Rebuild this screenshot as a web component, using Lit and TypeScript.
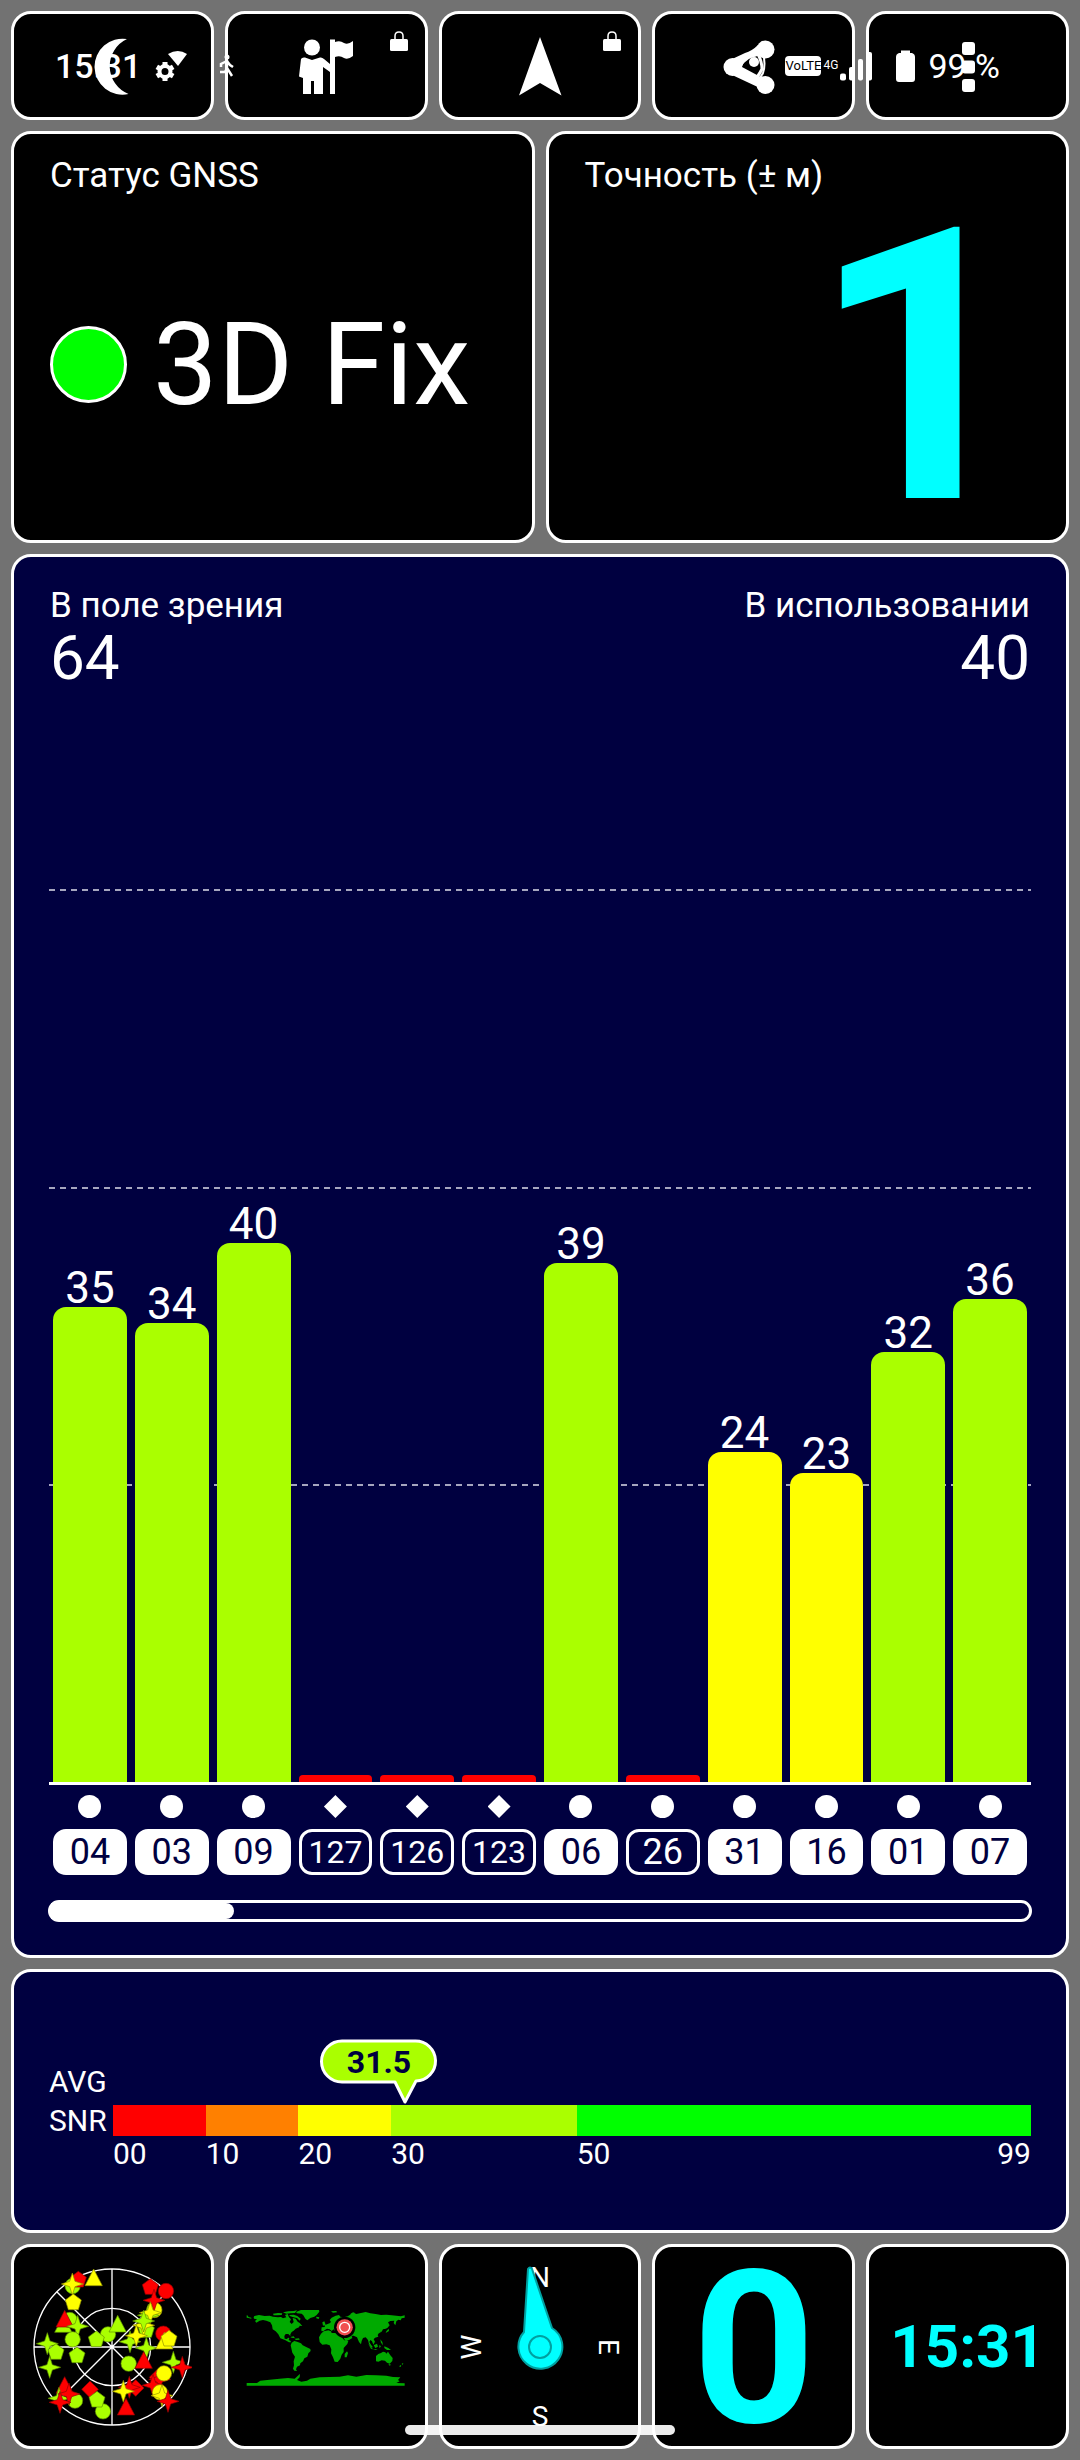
import { LitElement, html, svg, css } from "lit";
import { customElement } from "lit/decorators.js";
import { classMap } from "lit/directives/class-map.js";
import { styleMap } from "lit/directives/style-map.js";

type Kind = "circle" | "penta" | "star" | "tri" | "diamond";
type Tone = "lime" | "yellow" | "red";

interface Satellite {
  id: string;
  snr: number | null;
  level: number;
  tone: Tone;
  used: boolean;
  diamond?: boolean;
}

const SATELLITES: Satellite[] = [
  { id: "04", snr: 35, level: 53.2, tone: "lime", used: true },
  { id: "03", snr: 34, level: 51.4, tone: "lime", used: true },
  { id: "09", snr: 40, level: 60.4, tone: "lime", used: true },
  { id: "127", snr: null, level: 0.8, tone: "red", used: false, diamond: true },
  { id: "126", snr: null, level: 0.8, tone: "red", used: false, diamond: true },
  { id: "123", snr: null, level: 0.8, tone: "red", used: false, diamond: true },
  { id: "06", snr: 39, level: 58.1, tone: "lime", used: true },
  { id: "26", snr: null, level: 0.8, tone: "red", used: false },
  { id: "31", snr: 24, level: 36.9, tone: "yellow", used: true },
  { id: "16", snr: 23, level: 34.6, tone: "yellow", used: true },
  { id: "01", snr: 32, level: 48.2, tone: "lime", used: true },
  { id: "07", snr: 36, level: 54.1, tone: "lime", used: true },
];

const SKY: [Kind, number, number, Tone][] = [
  ["circle", 219, 166, "lime"], ["penta", 236, 147, "red"], ["star", 218, 160, "yellow"],
  ["tri", 282, 143, "yellow"], ["penta", 221, 215, "yellow"], ["tri", 191, 283, "lime"],
  ["circle", 210, 268, "lime"], ["tri", 195, 267, "red"], ["star", 234, 287, "lime"],
  ["circle", 325, 311, "lime"], ["penta", 290, 326, "lime"], ["tri", 354, 282, "lime"],
  ["star", 143, 339, "lime"], ["penta", 169, 364, "lime"], ["circle", 219, 326, "lime"],
  ["penta", 232, 374, "lime"], ["star", 150, 410, "lime"], ["star", 391, 333, "lime"],
  ["circle", 387, 399, "lime"], ["penta", 452, 169, "red"], ["circle", 499, 181, "red"],
  ["circle", 464, 238, "yellow"], ["star", 463, 209, "red"], ["star", 446, 254, "lime"],
  ["star", 452, 246, "yellow"], ["penta", 440, 298, "lime"], ["star", 432, 284, "yellow"],
  ["star", 432, 271, "lime"], ["star", 410, 315, "yellow"], ["star", 440, 352, "lime"],
  ["circle", 491, 309, "red"], ["tri", 494, 333, "yellow"], ["penta", 508, 324, "yellow"],
  ["tri", 432, 391, "red"], ["star", 521, 395, "lime"], ["star", 548, 410, "red"],
  ["diamond", 474, 440, "red"], ["star", 480, 446, "red"], ["star", 460, 464, "red"],
  ["circle", 493, 428, "yellow"], ["circle", 481, 485, "yellow"], ["star", 487, 495, "yellow"],
  ["star", 505, 512, "red"], ["diamond", 408, 472, "red"], ["star", 389, 470, "red"],
  ["star", 371, 482, "yellow"], ["tri", 379, 531, "red"], ["tri", 195, 466, "red"],
  ["star", 178, 503, "lime"], ["circle", 226, 510, "lime"], ["star", 208, 490, "red"],
  ["star", 181, 515, "red"], ["diamond", 271, 476, "red"], ["circle", 310, 542, "lime"],
  ["penta", 292, 507, "lime"],
];

const SHAPES: Record<Kind, string> = {
  circle: "M-23 0A23 23 0 1 1 23 0A23 23 0 1 1 -23 0Z",
  penta: "M0 -25L24 -7L15 22L-15 22L-24 -7Z",
  star: "M0 -33L8 -8L33 0L8 8L0 33L-8 8L-33 0L-8 -8Z",
  tri: "M0 -28L26 22L-26 22Z",
  diamond: "M0 -25L25 0L0 25L-25 0Z",
};

const FILL: Record<Tone, string> = { lime: "#aaff00", yellow: "#ffff00", red: "#ff0000" };
const EDGE: Record<Tone, string> = { lime: "#5f8f00", yellow: "#909000", red: "#900000" };

const LAND = [
  "M81 256L85 257L86 261L95 263L95 266L86 264L81 263Z",
  "M102 262L104 258L118 255L135 258L150 257L160 260L175 262L184 261L190 265L200 262L196 255L204 252L208 262L214 268L210 276L216 282L222 276L219 264L228 266L234 275L240 279L248 288L240 287L238 292L228 296L222 302L216 306L212 313L212 318L206 312L198 312L194 318L195 326L202 327L205 323L209 324L207 330L213 333L214 337L208 337L196 330L182 325L176 313L168 304L159 298L157 286L152 277L140 272L130 270L120 272L110 278L106 273L112 268L103 266Z",
  "M160 251L175 249L188 250L186 255L172 256L162 256ZM190 247L206 244L222 243L232 241L226 249L212 250L200 251ZM208 255L222 254L233 258L243 266L240 272L232 264L222 262L212 259Z",
  "M229 246L244 240L298 240L299 245L291 255L284 260L272 264L263 271L257 266L251 256L246 251L232 250Z",
  "M290 260L299 262L297 267L290 265Z",
  "M212 321L222 319L226 325L216 323ZM226 326L238 325L240 329L228 330Z",
  "M213 346L216 338L224 333L232 335L244 340L249 346L258 350L272 357L273 363L266 370L263 380L254 385L250 394L242 400L241 406L232 410L229 418L232 423L224 422L220 416L223 406L222 394L226 380L218 368Z",
  "M298 322L304 311L312 304L326 301L334 304L336 309L345 309L360 311L366 322L374 331L386 333L383 342L372 354L372 366L366 374L362 386L354 396L345 395L340 382L334 370L335 358L330 346L320 343L308 344L300 336Z",
  "M375 372L382 364L385 369L381 382L375 382Z",
  "M305 300L306 292L316 291L314 286L322 283L330 280L334 276L330 270L336 263L348 257L358 255L362 260L372 262L384 259L390 255L394 252L402 248L410 252L424 249L438 246L452 250L468 252L484 255L500 254L516 256L530 257L544 259L555 256L555 263L546 265L543 271L536 269L530 274L527 286L522 279L524 272L512 273L505 277L510 286L503 294L498 296L490 298L486 305L480 306L474 315L476 320L466 323L462 328L466 335L461 344L457 334L452 330L449 336L454 344L460 352L454 352L448 342L445 330L438 322L430 324L426 333L424 343L418 336L412 322L402 317L396 318L398 324L388 330L378 334L370 320L364 310L352 308L346 304L342 298L336 303L330 298L322 296L316 300L312 303L306 304Z",
  "M308 277L314 274L318 284L310 287ZM334 244L350 243L352 247L340 248ZM392 252L400 247L406 249L396 256Z",
  "M500 304L507 296L508 303L498 309ZM476 304L484 305L480 310Z",
  "M446 342L454 350L460 358L474 357L468 360L454 356ZM462 346L472 341L475 350L467 354ZM478 346L484 348L480 355ZM482 328L488 336L490 346L484 338ZM494 349L506 354L514 360L502 360L494 354Z",
  "M469 378L476 372L484 369L490 365L497 367L500 371L505 365L512 376L519 384L518 393L510 401L502 398L496 392L486 391L476 395L469 394Z",
  "M506 403L513 403L511 408ZM546 401L551 399L549 405ZM538 409L545 404L543 411Z",
  "M81 459L112 459L122 452L150 449L180 446L205 444L225 446L238 434L241 432L240 442L232 450L245 455L262 452L272 446L300 442L330 441L360 440L385 436L410 440L440 435L470 436L500 437L520 441L542 442L535 450L540 454L530 459L555 460L555 467L81 467Z",
];

const moon = svg`<path d="M127 38A28 28 0 1 0 128.500 93A30 30 0 0 1 127 38Z" />`;

const ranger = svg`
  <circle cx="312" cy="46.500" r="8" />
  <path d="M301 58Q302 56 305 56.500L312 59L320 56.500Q322 56 324 58L330 63V38.500H335V93H330V71L323 66V93H314V80H311V93H303V77L299 75.500Z" />
  <path d="M335 41Q340 39 344 42Q348 44 353 40V55Q348 59 344 57Q340 54 335 56Z" />`;

const arrow = svg`<path d="M540 36L561.500 94.500L540 82L519 94.500Z" />`;

const share = svg`
  <g>
    <circle cx="732.500" cy="66" r="9" /><circle cx="765.500" cy="48.500" r="9" /><circle cx="765.500" cy="84" r="9" />
    <path d="M730 59L745 52Q752 50 758 44L768 53Q758 55 750 57Q744 59 742 66L768 80L762 88L730 73Z" />
    <path d="M740 65Q746 55 758 53Q762 61 762 68Q758 76 754 79" fill="none" stroke="#fff" stroke-width="3" />
    <path d="M763 52Q766 63 763 72Q760 78 756 81" fill="none" stroke="#fff" stroke-width="2" />
    <circle cx="754" cy="61" r="5" />
  </g>`;

const more = svg`
  <rect x="961" y="41" width="13" height="13" rx="3" />
  <rect x="961" y="59.500" width="13" height="13" rx="3" />
  <rect x="961" y="78" width="13" height="13" rx="3" />`;

const ACTIONS = [
  { label: "Ночной режим", x: 80, icon: moon, locked: false },
  { label: "Экскурсия", x: 294, icon: ranger, locked: true },
  { label: "Навигация", x: 508, icon: arrow, locked: true },
  { label: "Поделиться", x: 722, icon: share, locked: false },
  { label: "Ещё", x: 935, icon: more, locked: false },
];

@customElement("status-bar")
export class StatusBar extends LitElement {
  static styles = css`
    :host {
      display: flex;
      align-items: center;
      justify-content: space-between;
      height: 44px;
      padding: 0 80px 0 55px;
      color: #fff;
      font: 500 34px/44px Roboto, "Liberation Sans", sans-serif;
    }
    .group {
      display: flex;
      align-items: center;
    }
    .clock {
      margin-right: 14px;
    }
    .walker {
      margin-left: 32px;
    }
    .volte {
      background: #fff;
      color: #000;
      border-radius: 4px;
      width: 36px;
      height: 20px;
      text-align: center;
      font: 400 13px/20px Roboto, sans-serif;
    }
    .net {
      font: 400 12px/14px Roboto, sans-serif;
      width: 19px;
      text-align: center;
      align-self: flex-start;
      margin-top: 14px;
    }
    .battery {
      margin: 0 12px 0 24px;
    }
    .level {
      font-weight: 400;
    }
    svg {
      display: block;
      fill: #fff;
    }
  `;

  render() {
    return html`
      <div class="group">
        <span class="clock">15:31</span>
        <svg width="32" height="32" viewBox="155 50 32 32">
          <path d="M168 54Q178 48 187 54L178 66Z" />
          <circle cx="165" cy="71.500" r="5.500" fill="none" stroke="#fff" stroke-width="4" />
          <path d="M165 62V67M165 76V81M156.800 66.800L161 69.200M169 73.800L173.200 76.200M156.800 76.200L161 73.800M169 69.200L173.200 66.800" stroke="#fff" stroke-width="5" />
        </svg>
        <svg class="walker" width="16" height="24" viewBox="219 55 16 24">
          <circle cx="227" cy="58" r="2.500" />
          <path d="M227 61V69L232 77M227 69L225 73H220M221 68V65L227 62L230 66L233 68" fill="none" stroke="#fff" stroke-width="2.500" />
        </svg>
      </div>
      <div class="group">
        <span class="volte">VoLTE</span>
        <span class="net">4G</span>
        <svg width="32" height="30" viewBox="840 51 32 30">
          <rect x="840" y="73.500" width="6" height="7" rx="2" />
          <rect x="849" y="67" width="5" height="13.500" rx="2" />
          <rect x="858" y="59" width="5" height="21.500" rx="2" />
          <rect x="867" y="52" width="5" height="28.500" rx="2" />
        </svg>
        <svg class="battery" width="20" height="32" viewBox="896 50 20 32">
          <path d="M901 50.500H910V53H912Q915 54 915 57V79Q915 82 912 82H899Q896 82 896 79V57Q896 54 899 53H901Z" />
        </svg>
        <span class="level">99 %</span>
      </div>
    `;
  }
}

@customElement("snr-chart")
export class SnrChart extends LitElement {
  static styles = css`
    :host {
      display: flex;
      flex-direction: column;
      flex: 1;
    }
    .plot {
      flex: 1;
      display: grid;
      grid-template: minmax(0, 1fr) / minmax(0, 1fr);
      border-bottom: 3px solid #fff;
    }
    .lines,
    .bars {
      grid-area: 1 / 1;
    }
    .lines {
      display: flex;
      flex-direction: column;
    }
    .band {
      flex: 1;
      background: repeating-linear-gradient(90deg, #a6a6bf 0 6px, transparent 6px 11px) top / 100% 2px
        no-repeat;
    }
    .bars,
    .names {
      display: grid;
      grid-template-columns: repeat(12, minmax(0, 1fr));
    }
    .column {
      display: flex;
      flex-direction: column;
      justify-content: flex-end;
      padding: 0 4px;
    }
    .value {
      text-align: center;
      font-size: 44px;
      line-height: 38px;
    }
    .bar {
      flex-shrink: 0;
      border-radius: 13px 13px 0 0;
    }
    .lime {
      background: #aaff00;
    }
    .yellow {
      background: #ffff00;
    }
    .red {
      background: #ff0000;
      border-radius: 4px 4px 0 0;
    }
    .names {
      margin-top: 10px;
    }
    .name {
      display: flex;
      flex-direction: column;
      align-items: center;
      gap: 11px;
      padding: 0 4px;
    }
    .dot {
      width: 23px;
      height: 23px;
      background: #fff;
      border-radius: 50%;
    }
    .dot.rhomb {
      border-radius: 0;
      clip-path: polygon(50% 0, 100% 50%, 50% 100%, 0 50%);
    }
    .pill {
      align-self: stretch;
      box-sizing: border-box;
      height: 46px;
      border: 3px solid #fff;
      border-radius: 13px;
      text-align: center;
      font-size: 36px;
      line-height: 41px;
    }
    .pill.used {
      background: #fff;
      color: #000040;
    }
    .pill.long {
      font-size: 32px;
      line-height: 40px;
    }
  `;

  render() {
    return html`
      <div class="plot">
        <div class="lines">
          <div class="band"></div>
          <div class="band"></div>
          <div class="band"></div>
        </div>
        <div class="bars">
          ${SATELLITES.map(
            (s) => html`<div class="column">
              ${s.snr === null ? null : html`<span class="value">${s.snr}</span>`}
              <div class="bar ${s.tone}" style=${styleMap({ height: `${s.level}%` })}></div>
            </div>`
          )}
        </div>
      </div>
      <div class="names">
        ${SATELLITES.map(
          (s) => html`<div class="name">
            <span class=${classMap({ dot: true, rhomb: !!s.diamond })}></span>
            <span class=${classMap({ pill: true, used: s.used, long: s.id.length > 2 })}>${s.id}</span>
          </div>`
        )}
      </div>
    `;
  }
}

@customElement("snr-scale")
export class SnrScale extends LitElement {
  static styles = css`
    :host {
      display: grid;
      grid-template: 67px 31px 36px / 64px minmax(0, 1fr);
      font-size: 30px;
    }
    .caption {
      grid-area: 1 / 1 / 4 / 2;
      margin-top: 24px;
      line-height: 39px;
    }
    .caption span {
      display: block;
    }
    .track {
      position: relative;
      grid-area: 1 / 2;
    }
    .bubble {
      position: absolute;
      top: 0;
      margin-left: -86px;
      display: block;
      font-size: 32px;
      font-weight: 700;
    }
    .range,
    .ticks {
      display: grid;
      grid-template-columns: 10fr 10fr 10fr 20fr 49fr;
      grid-column: 2;
    }
    .c0 {
      background: #ff0000;
    }
    .c1 {
      background: #ff8000;
    }
    .c2 {
      background: #ffff00;
    }
    .c3 {
      background: #aaff00;
    }
    .c4 {
      background: #00ff00;
    }
    .ticks {
      line-height: 36px;
    }
    .last {
      display: flex;
      justify-content: space-between;
    }
  `;

  private readonly average = 31.5;

  render() {
    return html`
      <div class="caption"><span>AVG</span><span>SNR</span></div>
      <div class="track">
        <svg
          class="bubble"
          style=${styleMap({ left: `${(this.average / 99) * 100}%` })}
          width="119"
          height="67"
          viewBox="0 0 119 67"
        >
          <path
            d="M23 3H96A20 20 0 0 1 97 43L86 64L76 44H23A20 20 0 0 1 23 3Z"
            fill="#aaff00"
            stroke="#fff"
            stroke-width="3"
            stroke-linejoin="round"
          />
          <text x="60" y="35" text-anchor="middle" fill="#000040">${this.average}</text>
        </svg>
      </div>
      <div class="range">${[0, 1, 2, 3, 4].map((i) => html`<div class="c${i}"></div>`)}</div>
      <div class="ticks">
        <span>00</span><span>10</span><span>20</span><span>30</span>
        <span class="last"><span>50</span><span>99</span></span>
      </div>
    `;
  }
}

@customElement("app-root")
export class AppRoot extends LitElement {
  static styles = css`
    :host {
      display: grid;
      position: relative;
      box-sizing: border-box;
      min-height: 100vh;
      padding: 11px;
      gap: 11px;
      grid-template-rows: auto auto 1fr auto auto;
      background: #727272;
      color: #fff;
      font-family: Roboto, "Liberation Sans", sans-serif;
    }
    .card {
      box-sizing: border-box;
      border: 3px solid #fff;
      border-radius: 20px;
      background: #000;
      color: #fff;
      font: inherit;
      position: relative;
      display: flex;
      flex-direction: column;
      margin: 0;
      padding: 0;
      min-width: 0;
    }
    .five {
      display: grid;
      grid-template-columns: repeat(5, minmax(0, 1fr));
      gap: 11px;
    }
    .two {
      display: grid;
      grid-template-columns: repeat(2, minmax(0, 1fr));
      gap: 11px;
    }
    .action {
      min-height: 109px;
      align-items: center;
      justify-content: center;
    }
    .tile {
      min-height: 205px;
      align-items: center;
      justify-content: center;
      color: #00ffff;
      font-weight: 700;
    }
    .icon {
      display: block;
      fill: #fff;
    }
    .lock {
      position: absolute;
      top: 17px;
      right: 17px;
    }
    .info {
      min-height: 412px;
      padding: 21px 37px 0 36px;
    }
    .title {
      font-size: 35px;
      line-height: 42px;
    }
    .fix {
      flex: 1;
      display: flex;
      align-items: center;
      gap: 26px;
      padding-bottom: 8px;
      font-size: 115px;
      line-height: 136px;
      white-space: nowrap;
    }
    .lamp {
      box-sizing: border-box;
      width: 77px;
      height: 77px;
      border: 3px solid #fff;
      border-radius: 50%;
      background: #00ff00;
    }
    .accuracy {
      flex: 1;
      text-align: right;
      color: #00ffff;
      font-size: 381px;
      line-height: 342px;
      font-weight: 700;
      margin-bottom: -1px;
    }
    .navy {
      background: #000040;
    }
    .signal {
      padding: 28px 35px 33px;
    }
    .counts {
      display: flex;
      justify-content: space-between;
      margin-bottom: 200px;
      padding: 0 1px;
    }
    .count.end {
      text-align: right;
    }
    .number {
      font-size: 62px;
      line-height: 62px;
    }
    .scroll {
      height: 16px;
      margin: 25px -1px 0;
      border: 3px solid #fff;
      border-radius: 11px;
    }
    .thumb {
      height: 16px;
      background: #fff;
      border-radius: 0 8px 8px 0;
    }
    .average {
      min-height: 264px;
      padding: 66px 35px 0;
    }
    .speed {
      font-size: 214px;
      line-height: 190px;
      padding-top: 4px;
    }
    .time {
      font-size: 60px;
      line-height: 70px;
    }
    .compass {
      font-size: 28px;
      font-weight: 400;
    }
    .system {
      position: absolute;
      top: 44px;
      left: 0;
      right: 0;
      pointer-events: none;
    }
    .home {
      position: absolute;
      bottom: 25px;
      left: 0;
      right: 0;
      width: 25%;
      height: 10px;
      margin: 0 auto;
      border-radius: 5px;
      background: rgba(255, 255, 255, 0.92);
      pointer-events: none;
    }
  `;

  private sky() {
    return html`<svg class="icon" width="160" height="160" viewBox="97 109 480 480">
      <g fill="none" stroke="#fff" stroke-width="4">
        <circle cx="337" cy="349" r="234" />
        <circle cx="337" cy="349" r="116" />
        <path d="M337 115V583M103 349H571M172 184L502 514M172 514L502 184" />
      </g>
      ${SKY.map(
        ([kind, x, y, tone]) => svg`<path
          d=${SHAPES[kind]}
          transform="translate(${x} ${y})"
          fill=${FILL[tone]}
          stroke=${EDGE[tone]}
          stroke-width="2" />`
      )}
    </svg>`;
  }

  private world() {
    return html`<svg class="icon" width="160" height="79" viewBox="79 231 480 237">
      ${LAND.map((d) => svg`<path d=${d} fill="#00aa00" />`)}
      <circle cx="375" cy="292" r="32" fill="#000" />
      <circle cx="375" cy="292" r="24.500" fill="#f05050" />
      <circle cx="375" cy="292" r="15" fill="none" stroke="#fff" stroke-width="4" />
    </svg>`;
  }

  private compass() {
    return html`<svg class="icon compass" width="184" height="184" viewBox="-12 -12 184 184">
      <g text-anchor="middle">
        <text x="80" y="20">N</text>
        <text x="80" y="159">S</text>
        <text transform="translate(21 80) rotate(-90)">W</text>
        <text transform="translate(139 80) rotate(90)">E</text>
      </g>
      <path
        d="M68 2Q70 -1 72 2L92 61A22 22 0 1 1 64 65Z"
        fill="#00ffff"
        stroke="#00a0a0"
        stroke-width="2"
      />
      <circle cx="80" cy="80" r="11" fill="none" stroke="#00a0a0" stroke-width="2" />
    </svg>`;
  }

  render() {
    return html`
      <div class="five">
        ${ACTIONS.map(
          (a) => html`<button class="card action" type="button" aria-label=${a.label}>
            <svg class="icon" width="64" height="64" viewBox="${a.x} 33 64 64">${a.icon}</svg>
            ${a.locked
              ? html`<svg class="icon lock" width="18" height="20" viewBox="0 0 18 20">
                  <path d="M0 9.500Q0 8 1.500 8H16.500Q18 8 18 9.500V18.500Q18 20 16.500 20H1.500Q0 20 0 18.500Z" />
                  <path d="M5 9V5Q5 1 9 1Q13 1 13 5V9" fill="none" stroke="#fff" stroke-width="1.500" />
                </svg>`
              : null}
          </button>`
        )}
      </div>

      <div class="two">
        <section class="card info">
          <div class="title">Статус GNSS</div>
          <div class="fix"><span class="lamp"></span><span>3D Fix</span></div>
        </section>
        <section class="card info">
          <div class="title">Точность (± м)</div>
          <div class="accuracy">1</div>
        </section>
      </div>

      <section class="card navy signal">
        <div class="counts">
          <div class="count">
            <div class="title">В поле зрения</div>
            <div class="number">64</div>
          </div>
          <div class="count end">
            <div class="title">В использовании</div>
            <div class="number">40</div>
          </div>
        </div>
        <snr-chart></snr-chart>
        <div class="scroll">
          <div class="thumb" style=${styleMap({ width: `${(12 / 64) * 100}%` })}></div>
        </div>
      </section>

      <section class="card navy average"><snr-scale></snr-scale></section>

      <div class="five">
        <div class="card tile">${this.sky()}</div>
        <div class="card tile">${this.world()}</div>
        <div class="card tile">${this.compass()}</div>
        <div class="card tile"><span class="speed">0</span></div>
        <div class="card tile"><span class="time">15:31</span></div>
      </div>

      <status-bar class="system"></status-bar>
      <div class="home"></div>
    `;
  }
}
